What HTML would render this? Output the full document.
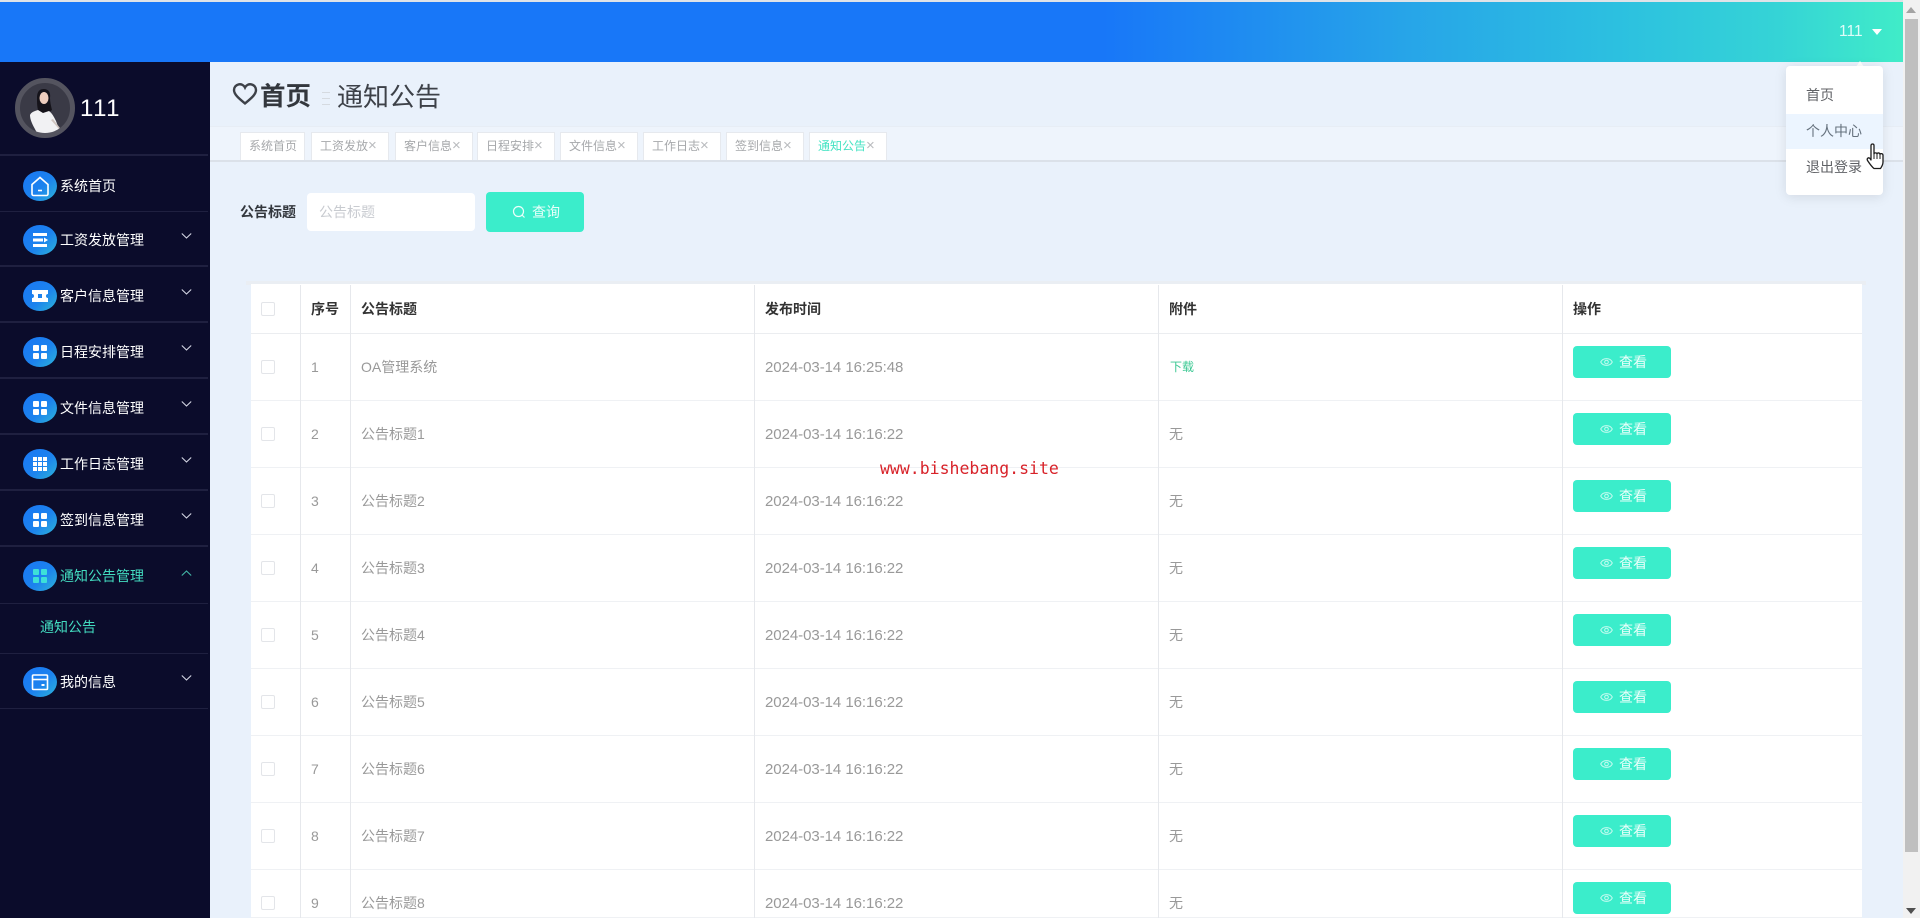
<!DOCTYPE html>
<html lang="zh"><head><meta charset="utf-8"><title>通知公告</title>
<style>
*{box-sizing:border-box;margin:0;padding:0}
html,body{width:1920px;height:918px;overflow:hidden;background:#e9f1fb;font-family:"Liberation Sans","Noto Sans CJK SC",sans-serif;font-size:14px}
.a{position:absolute}
#top{left:0;top:2px;width:1903px;height:60px;background:linear-gradient(90deg,#1877f8 0,#1877f8 58%,#27a5e8 74%,#2cc0e0 85%,#35d4d6 93.500%,#40ecc8 100%)}
#line{left:0;top:0;width:1920px;height:2px;background:#dfe3e8}
#side{left:0;top:62px;width:210px;height:856px;background:#0b0c2b}
.sep{position:absolute;left:0;width:208px;height:2px;background:#1f2040}
.sep.t{height:1px}
.ic{position:absolute;left:23px;width:34px;height:30px;border-radius:50%;background:linear-gradient(135deg,#1a78f4 0,#1c82ee 55%,#2db5d8 100%)}
.ic svg{position:absolute;left:0;top:0}
.mt{position:absolute;left:60px;height:20px;line-height:20px;color:#fff;font-size:14px;white-space:nowrap}
.ch{position:absolute;left:181px}
.tag{position:absolute;top:132px;height:28px;background:#fff;border:1px solid #e6e9ee;border-bottom:0;color:#a6a8ab;font-size:12px;line-height:27px;padding-left:8px;white-space:nowrap}
.tag i{font-style:normal;font-size:15px;line-height:1;color:#b9bbbe}
.r{position:absolute;left:251px;width:1611px;background:#fff;border-bottom:1px solid #eff1f4}
.v{position:absolute;width:1px;background:#e6e8ec;top:285px;height:633px}
.cb{position:absolute;left:10px;width:14px;height:14px;border:1px solid #e3e5e9;border-radius:2px;background:#fff}
.c{position:absolute;height:20px;line-height:20px;color:#999;white-space:nowrap;font-size:14px}
.h{font-weight:700;color:#333}
.t{font-size:15px;letter-spacing:-.05px;margin-top:1px}
.btn{position:absolute;left:1323px;width:98px;height:32px;border-radius:4px;background:#3bedcb;color:#eafffa;line-height:32px;font-size:14px}
.btn span{position:absolute;left:46px;top:0}
.btn svg{position:absolute;left:27px;top:10px}
#menu{left:1786px;top:66px;width:97px;height:129px;background:#fff;border-radius:4px;box-shadow:0 2px 12px rgba(0,0,0,.1)}
#menu div{position:absolute;left:0;width:97px;height:35px;line-height:35px;padding-left:20px;color:#606266;font-size:14px;white-space:nowrap}
</style></head><body>
<div class="a" id="line"></div>
<div class="a" id="top"></div>
<div class="a" style="left:1839px;top:22px;height:20px;line-height:20px;color:#dffcf8;font-size:15.500px">111</div>
<svg class="a" style="left:1871px;top:28px" width="12" height="8"><path d="M1 1h10L6 7z" fill="#fff"/></svg>

<div class="a" id="side">
<svg class="a" style="left:15px;top:16px" width="60" height="60" viewBox="0 0 60 60">
<defs><clipPath id="cp"><circle cx="30" cy="30" r="25"/></clipPath></defs>
<circle cx="30" cy="30" r="27.500" fill="#3a3a46" stroke="#54545f" stroke-width="5"/>
<g clip-path="url(#cp)">
<path d="M22 20c0-7 3-9 7-9s7 3 6 9c0 4 1 8 2 12l-4 3h-9c-2-5-2-10-2-15z" fill="#15131a"/>
<ellipse cx="29" cy="20" rx="4.500" ry="6" fill="#eecdbd"/>
<path d="M15 37c1-3 5-4 8-5l5 3 6-2c3 2 5 6 7 10l3 8-2 4H22c-3-6-7-12-7-18z" fill="#f1f1f3"/>
<path d="M36 42l8 9 1-1-7-9z" fill="#cfc4bf"/>
</g></svg>
<div class="a" style="left:80px;top:32px;height:30px;line-height:30px;font-size:24px;letter-spacing:1.500px;color:#fff">111</div>
<div class="sep" style="top:92px"></div><div class="sep t" style="top:148px"></div><div class="sep" style="top:203px"></div><div class="sep" style="top:259px"></div><div class="sep" style="top:315px"></div><div class="sep" style="top:371px"></div><div class="sep" style="top:427px"></div><div class="sep" style="top:483px"></div><div class="sep t" style="top:540px"></div><div class="sep t" style="top:590px"></div><div class="sep t" style="top:645px"></div>

<div class="ic" style="top:109px"><svg width="34" height="30" fill="none" stroke="#fff" stroke-width="1.600"><path d="M9 13.500 17 6.500l8 7V23a1.500 1.500 0 0 1-1.500 1.500h-13A1.500 1.500 0 0 1 9 23z"/><path d="M15 19.500h4"/></svg></div>
<div class="mt" style="top:114px">系统首页</div>

<div class="ic" style="top:163px"><svg width="34" height="30" fill="#fff"><rect x="10" y="8" width="14" height="3"/><rect x="10" y="13.500" width="10" height="3"/><path d="M21 12.500l4 2.500-4 2.500z"/><rect x="10" y="19" width="14" height="3"/></svg></div>
<div class="mt" style="top:168px">工资发放管理</div>
<svg class="ch" style="top:170px" width="11" height="8" fill="none" stroke="#d4d6e4" stroke-width="1.100"><path d="M.8 1.500 5.500 6 10.200 1.500"/></svg>

<div class="ic" style="top:219px"><svg width="34" height="30" fill="#fff"><path d="M9 9h16v4a2 2 0 0 0 0 4v4H9v-4a2 2 0 0 0 0-4z"/><rect x="15" y="13" width="4" height="4" fill="#1c82ee"/></svg></div>
<div class="mt" style="top:224px">客户信息管理</div>
<svg class="ch" style="top:226px" width="11" height="8" fill="none" stroke="#d4d6e4" stroke-width="1.100"><path d="M.8 1.500 5.500 6 10.200 1.500"/></svg>

<div class="ic" style="top:275px"><svg width="34" height="30" fill="#fff"><rect x="10" y="8" width="6" height="6" rx="1"/><rect x="18" y="8" width="6" height="6" rx="1"/><rect x="10" y="16" width="6" height="6" rx="1"/><rect x="18" y="16" width="6" height="6" rx="1"/></svg></div>
<div class="mt" style="top:280px">日程安排管理</div>
<svg class="ch" style="top:282px" width="11" height="8" fill="none" stroke="#d4d6e4" stroke-width="1.100"><path d="M.8 1.500 5.500 6 10.200 1.500"/></svg>

<div class="ic" style="top:331px"><svg width="34" height="30" fill="#fff"><rect x="10" y="8" width="6" height="6" rx="1"/><rect x="18" y="8" width="6" height="6" rx="1"/><rect x="10" y="16" width="6" height="6" rx="1"/><rect x="18" y="16" width="6" height="6" rx="1"/></svg></div>
<div class="mt" style="top:336px">文件信息管理</div>
<svg class="ch" style="top:338px" width="11" height="8" fill="none" stroke="#d4d6e4" stroke-width="1.100"><path d="M.8 1.500 5.500 6 10.200 1.500"/></svg>

<div class="ic" style="top:387px"><svg width="34" height="30" fill="#fff"><rect x="10" y="8" width="4" height="4"/><rect x="15" y="8" width="4" height="4"/><rect x="20" y="8" width="4" height="4"/><rect x="10" y="13" width="4" height="4"/><rect x="15" y="13" width="4" height="4"/><rect x="20" y="13" width="4" height="4"/><rect x="10" y="18" width="4" height="4"/><rect x="15" y="18" width="4" height="4"/><rect x="20" y="18" width="4" height="4"/></svg></div>
<div class="mt" style="top:392px">工作日志管理</div>
<svg class="ch" style="top:394px" width="11" height="8" fill="none" stroke="#d4d6e4" stroke-width="1.100"><path d="M.8 1.500 5.500 6 10.200 1.500"/></svg>

<div class="ic" style="top:443px"><svg width="34" height="30" fill="#fff"><rect x="10" y="8" width="6" height="6" rx="1"/><rect x="18" y="8" width="6" height="6" rx="1"/><rect x="10" y="16" width="6" height="6" rx="1"/><rect x="18" y="16" width="6" height="6" rx="1"/></svg></div>
<div class="mt" style="top:448px">签到信息管理</div>
<svg class="ch" style="top:450px" width="11" height="8" fill="none" stroke="#d4d6e4" stroke-width="1.100"><path d="M.8 1.500 5.500 6 10.200 1.500"/></svg>

<div class="ic" style="top:499px"><svg width="34" height="30" fill="#3de0d8"><rect x="10" y="8" width="6" height="6" rx="1"/><rect x="18" y="8" width="6" height="6" rx="1"/><rect x="10" y="16" width="6" height="6" rx="1"/><rect x="18" y="16" width="6" height="6" rx="1"/></svg></div>
<div class="mt" style="top:504px;color:#43dcc0">通知公告管理</div>
<svg class="ch" style="top:507px" width="11" height="8" fill="none" stroke="#43b8a8" stroke-width="1.100"><path d="M.8 6.500 5.500 2 10.200 6.500"/></svg>

<div class="mt" style="left:40px;top:555px;color:#43dcc0">通知公告</div>

<div class="ic" style="top:605px"><svg width="34" height="30" fill="none" stroke="#fff" stroke-width="1.600"><rect x="9.500" y="8" width="15" height="14.500" rx="1"/><path d="M9.500 12.500h15"/><path d="M18.500 18h3" stroke-width="2"/></svg></div>
<div class="mt" style="top:610px">我的信息</div>
<svg class="ch" style="top:612px" width="11" height="8" fill="none" stroke="#d4d6e4" stroke-width="1.100"><path d="M.8 1.500 5.500 6 10.200 1.500"/></svg>
</div>

<svg class="a" style="left:232px;top:82px" width="26" height="24" fill="none" stroke="#3d4148" stroke-width="2.400"><path d="M13 21.500C7 16.500 2 12.500 2 8a5.800 5.800 0 0 1 11-2.500A5.800 5.800 0 0 1 24 8c0 4.500-5 8.500-11 13.500z"/></svg>
<div class="a" style="left:260px;top:79px;height:36px;line-height:36px;font-size:25.500px;font-weight:700;color:#33373d">首页</div>
<div class="a" style="left:322px;top:92px;width:8px;height:13px;border-top:1px solid #d5dae0;border-bottom:1px solid #d5dae0"></div>
<div class="a" style="left:322px;top:98px;width:8px;height:1px;background:#d5dae0"></div>
<div class="a" style="left:337px;top:79px;height:36px;line-height:36px;font-size:26px;color:#3d4148">通知公告</div>

<div class="a" style="left:210px;top:126px;width:1693px;height:36px;background:#eef4fc;border-top:1px solid #e7edf5;border-bottom:2px solid #dbe1e9"></div>
<div class="tag" style="left:240px;width:65px">系统首页</div>
<div class="tag" style="left:311px;width:78px">工资发放<i>×</i></div>
<div class="tag" style="left:395px;width:78px">客户信息<i>×</i></div>
<div class="tag" style="left:477px;width:78px">日程安排<i>×</i></div>
<div class="tag" style="left:560px;width:78px">文件信息<i>×</i></div>
<div class="tag" style="left:643px;width:78px">工作日志<i>×</i></div>
<div class="tag" style="left:726px;width:78px">签到信息<i>×</i></div>
<div class="tag" style="left:809px;width:78px;color:#45e3c3">通知公告<i>×</i></div>

<div class="a" style="left:240px;top:202px;height:20px;line-height:20px;font-weight:700;color:#33373d">公告标题</div>
<div class="a" style="left:307px;top:193px;width:168px;height:38px;background:#fff;border-radius:4px;color:#c8cbd0;line-height:38px;padding-left:12px">公告标题</div>
<div class="a" style="left:486px;top:192px;width:98px;height:40px;background:#3bedcb;border-radius:4px;color:#eafffa;line-height:40px"><span class="a" style="left:46px;top:0">查询</span>
<svg class="a" style="left:26px;top:13px" width="14" height="14" fill="none" stroke="#eafffa" stroke-width="1.200"><circle cx="6.500" cy="6.500" r="5"/><path d="M10 10l2.500 2.500"/></svg></div>

<div class="a" style="left:246px;top:281px;width:1620px;height:4px;background:#eaeef3"></div>
<div class="r" style="top:284px;height:50px;border-bottom:1px solid #ebedf0"><div class="cb" style="top:18px"></div></div>
<div class="r" style="top:334px;height:67px"><div class="cb" style="top:26px"></div></div>
<div class="r" style="top:401px;height:67px"><div class="cb" style="top:26px"></div></div>
<div class="r" style="top:468px;height:67px"><div class="cb" style="top:26px"></div></div>
<div class="r" style="top:535px;height:67px"><div class="cb" style="top:26px"></div></div>
<div class="r" style="top:602px;height:67px"><div class="cb" style="top:26px"></div></div>
<div class="r" style="top:669px;height:67px"><div class="cb" style="top:26px"></div></div>
<div class="r" style="top:736px;height:67px"><div class="cb" style="top:26px"></div></div>
<div class="r" style="top:803px;height:67px"><div class="cb" style="top:26px"></div></div>
<div class="r" style="top:870px;height:48px"><div class="cb" style="top:26px"></div></div>
<div class="v" style="left:300px"></div><div class="v" style="left:350px"></div><div class="v" style="left:754px"></div><div class="v" style="left:1158px"></div><div class="v" style="left:1562px"></div>

<div class="c h" style="left:311px;top:299px">序号</div><div class="c h" style="left:361px;top:299px">公告标题</div><div class="c h" style="left:765px;top:299px">发布时间</div><div class="c h" style="left:1169px;top:299px">附件</div><div class="c h" style="left:1573px;top:299px">操作</div>

<div class="c" style="left:311px;top:357px">1</div><div class="c" style="left:361px;top:357px">OA管理系统</div><div class="c t" style="left:765px;top:357px">2024-03-14 16:25:48</div><div class="c" style="left:1170px;top:357px;font-size:12px;color:#3cc893">下载</div>
<div class="c" style="left:311px;top:424px">2</div><div class="c" style="left:361px;top:424px">公告标题1</div><div class="c t" style="left:765px;top:424px">2024-03-14 16:16:22</div><div class="c" style="left:1169px;top:424px">无</div>
<div class="c" style="left:311px;top:491px">3</div><div class="c" style="left:361px;top:491px">公告标题2</div><div class="c t" style="left:765px;top:491px">2024-03-14 16:16:22</div><div class="c" style="left:1169px;top:491px">无</div>
<div class="c" style="left:311px;top:558px">4</div><div class="c" style="left:361px;top:558px">公告标题3</div><div class="c t" style="left:765px;top:558px">2024-03-14 16:16:22</div><div class="c" style="left:1169px;top:558px">无</div>
<div class="c" style="left:311px;top:625px">5</div><div class="c" style="left:361px;top:625px">公告标题4</div><div class="c t" style="left:765px;top:625px">2024-03-14 16:16:22</div><div class="c" style="left:1169px;top:625px">无</div>
<div class="c" style="left:311px;top:692px">6</div><div class="c" style="left:361px;top:692px">公告标题5</div><div class="c t" style="left:765px;top:692px">2024-03-14 16:16:22</div><div class="c" style="left:1169px;top:692px">无</div>
<div class="c" style="left:311px;top:759px">7</div><div class="c" style="left:361px;top:759px">公告标题6</div><div class="c t" style="left:765px;top:759px">2024-03-14 16:16:22</div><div class="c" style="left:1169px;top:759px">无</div>
<div class="c" style="left:311px;top:826px">8</div><div class="c" style="left:361px;top:826px">公告标题7</div><div class="c t" style="left:765px;top:826px">2024-03-14 16:16:22</div><div class="c" style="left:1169px;top:826px">无</div>
<div class="c" style="left:311px;top:893px">9</div><div class="c" style="left:361px;top:893px">公告标题8</div><div class="c t" style="left:765px;top:893px">2024-03-14 16:16:22</div><div class="c" style="left:1169px;top:893px">无</div>

<div class="btn" style="left:1573px;top:346px"><svg width="13" height="12" fill="none" stroke="#c4fbf0" stroke-width="1"><path d="M.7 6C3 1.500 10 1.500 12.300 6 10 10.500 3 10.500.7 6z"/><circle cx="6.500" cy="6" r="1.800"/></svg><span>查看</span></div>
<div class="btn" style="left:1573px;top:413px"><svg width="13" height="12" fill="none" stroke="#c4fbf0" stroke-width="1"><path d="M.7 6C3 1.500 10 1.500 12.300 6 10 10.500 3 10.500.7 6z"/><circle cx="6.500" cy="6" r="1.800"/></svg><span>查看</span></div>
<div class="btn" style="left:1573px;top:480px"><svg width="13" height="12" fill="none" stroke="#c4fbf0" stroke-width="1"><path d="M.7 6C3 1.500 10 1.500 12.300 6 10 10.500 3 10.500.7 6z"/><circle cx="6.500" cy="6" r="1.800"/></svg><span>查看</span></div>
<div class="btn" style="left:1573px;top:547px"><svg width="13" height="12" fill="none" stroke="#c4fbf0" stroke-width="1"><path d="M.7 6C3 1.500 10 1.500 12.300 6 10 10.500 3 10.500.7 6z"/><circle cx="6.500" cy="6" r="1.800"/></svg><span>查看</span></div>
<div class="btn" style="left:1573px;top:614px"><svg width="13" height="12" fill="none" stroke="#c4fbf0" stroke-width="1"><path d="M.7 6C3 1.500 10 1.500 12.300 6 10 10.500 3 10.500.7 6z"/><circle cx="6.500" cy="6" r="1.800"/></svg><span>查看</span></div>
<div class="btn" style="left:1573px;top:681px"><svg width="13" height="12" fill="none" stroke="#c4fbf0" stroke-width="1"><path d="M.7 6C3 1.500 10 1.500 12.300 6 10 10.500 3 10.500.7 6z"/><circle cx="6.500" cy="6" r="1.800"/></svg><span>查看</span></div>
<div class="btn" style="left:1573px;top:748px"><svg width="13" height="12" fill="none" stroke="#c4fbf0" stroke-width="1"><path d="M.7 6C3 1.500 10 1.500 12.300 6 10 10.500 3 10.500.7 6z"/><circle cx="6.500" cy="6" r="1.800"/></svg><span>查看</span></div>
<div class="btn" style="left:1573px;top:815px"><svg width="13" height="12" fill="none" stroke="#c4fbf0" stroke-width="1"><path d="M.7 6C3 1.500 10 1.500 12.300 6 10 10.500 3 10.500.7 6z"/><circle cx="6.500" cy="6" r="1.800"/></svg><span>查看</span></div>
<div class="btn" style="left:1573px;top:882px"><svg width="13" height="12" fill="none" stroke="#c4fbf0" stroke-width="1"><path d="M.7 6C3 1.500 10 1.500 12.300 6 10 10.500 3 10.500.7 6z"/><circle cx="6.500" cy="6" r="1.800"/></svg><span>查看</span></div>

<div class="a" style="left:880px;top:458px;height:22px;line-height:22px;font-family:'DejaVu Sans Mono','Liberation Mono',monospace;font-size:16.500px;color:#d8232a;white-space:nowrap">www.bishebang.site</div>

<div class="a" style="left:1856px;top:61px;width:8px;height:6px;background:#fff;clip-path:polygon(50% 0,100% 100%,0 100%)"></div>
<div class="a" id="menu">
<div style="top:12px">首页</div>
<div style="top:48px;background:#ecf5ff;color:#66727e">个人中心</div>
<div style="top:84px">退出登录</div>
</div>
<svg class="a" style="left:1866px;top:142px" width="20" height="28" viewBox="0 0 20 28"><path d="M5 3.500c0-2 3-2 3 0V12c0-1.500 3-1.500 3 0 0-1.500 3-1.500 3 .5 0-1.500 3-1 3 .8V20c0 3-1.500 5-2.500 6.500H8C6 25 3.500 21.500 1.500 18.500c-1-2 1-3.500 2.500-2L5 18z" fill="#fff" stroke="#1c1c1c" stroke-width="1.300" stroke-linejoin="round"/><path d="M8 12v5M11 12v5M14 12.500V17" stroke="#1c1c1c" stroke-width="1" fill="none"/></svg>

<div class="a" style="left:1903px;top:0;width:17px;height:918px;background:#f1f1f1"></div>
<div class="a" style="left:1905px;top:19px;width:13px;height:833px;background:#bfbfbf"></div>
<svg class="a" style="left:1906px;top:7px" width="10" height="6"><path d="M5 0l5 6H0z" fill="#a3a3a3"/></svg>
<svg class="a" style="left:1906px;top:908px" width="10" height="6"><path d="M0 0h10L5 6z" fill="#505050"/></svg>
</body></html>
